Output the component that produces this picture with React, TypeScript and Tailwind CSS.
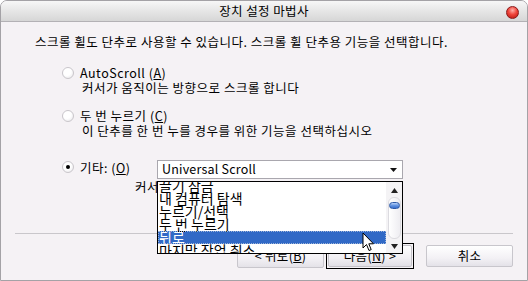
import React from 'react'

const FONT = "font-['Noto_Sans_CJK_KR','Noto_Sans',sans-serif]"

function Radio({ checked = false }: { checked?: boolean }) {
  return (
    <span className="relative w-[12px] h-[12px] shrink-0 rounded-full border border-[#c9c6cb] bg-[radial-gradient(circle_at_40%_35%,#ffffff_0%,#ffffff_45%,#e4e2e6_100%)] flex items-center justify-center">
      {checked && <span className="w-[4px] h-[4px] rounded-full bg-black" />}
    </span>
  )
}

function Key({ k }: { k: string }) {
  return <span className="underline underline-offset-[1px]">{k}</span>
}

const items = ['끌기 잠금', '내 컴퓨터 탐색', '누르기/선택', '두 번 누르기', '뒤로', '마지막 작업 취소']

function DropList() {
  return (
    <div className="absolute left-[157px] top-[181px] w-[246px] h-[73px] border border-black bg-white flex overflow-hidden">
      <div className="flex-1 relative overflow-hidden">
        <div className="absolute left-0 right-0 top-[-3px]">
          {items.map(t => {
            const sel = t === '뒤로'
            return (
              <div
                key={t}
                className={
                  'h-[13px] leading-[13px] text-[14px] pl-[1px] whitespace-nowrap ' +
                  (sel ? 'bg-[#3169c6] text-white outline outline-1 outline-dotted outline-[#9db4d8] -outline-offset-1' : 'text-black')
                }
              >
                {t}
              </div>
            )
          })}
        </div>
      </div>
      {/* scrollbar */}
      <div className="w-[16px] h-full bg-[#f4f3f5] flex flex-col items-center">
        <div className="h-[15px] w-full flex items-center justify-center pt-[2px]">
          <svg width="7" height="5" viewBox="0 0 7 5"><path d="M0 5L3.5 0L7 5Z" fill="#222" /></svg>
        </div>
        <div className="relative w-[13px] flex-1 rounded-[6px] border border-[#dcdbe0] bg-[linear-gradient(90deg,#ffffff,#eeedf1)] mb-[1px]">
          <div className="absolute left-[0px] top-[4px] w-[11px] h-[7px] rounded-[4px] border border-[#2b59a8] bg-[linear-gradient(180deg,#b5d0f7,#5c8fe0_55%,#3a6fcb)]" />
        </div>
        <div className="h-[13px] w-full flex items-center justify-center">
          <svg width="7" height="5" viewBox="0 0 7 5"><path d="M0 0L7 0L3.5 5Z" fill="#222" /></svg>
        </div>
      </div>
    </div>
  )
}

function Cursor() {
  return (
    <svg className="absolute left-[362px] top-[232px]" width="13" height="21" viewBox="0 0 13 21">
      <path d="M1 1L1 16L4.5 12.5L7 18.5L9.2 17.6L6.8 11.8L11.5 11.8Z" fill="#fff" stroke="#000" strokeWidth="1" strokeLinejoin="miter" />
    </svg>
  )
}

function Button({ children, def = false, h }: { children: React.ReactNode; def?: boolean; h: string }) {
  if (def) {
    return (
      <div className={'w-[88px] ' + h + ' border border-black p-[1px] flex'}>
        <div className="flex-1 rounded-[2px] border border-[#c4c2c8] bg-[linear-gradient(180deg,#ffffff,#f1eff3_60%,#e2e0e6)] flex items-center justify-center text-[12.5px] tracking-[0.3px] text-black">
          {children}
        </div>
      </div>
    )
  }
  return (
    <div className={'w-[87px] ' + h + ' rounded-[2px] border border-[#c8c6cc] bg-[linear-gradient(180deg,#ffffff,#f3f1f5_60%,#e4e2e8)] flex items-center justify-center text-[12.5px] tracking-[0.3px] text-black'}>
      {children}
    </div>
  )
}

export default function App() {
  return (
    <div className={'relative w-[528px] h-[281px] overflow-hidden bg-white ' + FONT}>
      <div className="w-full h-full rounded-t-[7px] border border-[#a4a2a6] bg-[#f5f2f5] flex flex-col">
        {/* title bar */}
        <div className="relative h-[21px] shrink-0 rounded-t-[6px] border-b border-[#b3b1b5] bg-[linear-gradient(180deg,#f7f7f7,#e6e6e6_50%,#d6d6d6)] flex items-center justify-center">
          <span className="text-[12.5px] tracking-[0.4px] text-black leading-none">장치 설정 마법사</span>
          <span className="absolute right-[8px] top-[5px] w-[13px] h-[13px] rounded-full border border-[#8a1a1a] bg-[radial-gradient(circle_at_50%_30%,#ffb0a8_0%,#f0463c_45%,#b3120c_100%)]" />
        </div>

        {/* body */}
        <div className="flex flex-col text-[12.5px] tracking-[0.5px] text-black">
          <div className="mt-[12px] pl-[34px] leading-[16px]">
            스크롤 휠도 단추로 사용할 수 있습니다. 스크롤 휠 단추용 기능을 선택합니다.
          </div>

          <div className="mt-[15px] leading-[15px]">
            <div className="flex items-center pl-[61px] gap-[6px]">
              <Radio />
              <span>AutoScroll (<Key k="A" />)</span>
            </div>
            <div className="pl-[81px]">커서가 움직이는 방향으로 스크롤 합니다</div>
          </div>

          <div className="mt-[13px] leading-[15px]">
            <div className="flex items-center pl-[61px] gap-[6px]">
              <Radio />
              <span>두 번 누르기 (<Key k="C" />)</span>
            </div>
            <div className="pl-[81px]">이 단추를 한 번 누를 경우를 위한 기능을 선택하십시오</div>
          </div>

          <div className="mt-[22px]">
            <div className="flex items-start pl-[61px]">
              <div className="flex items-center gap-[6px] h-[14px] w-[95px]">
                <Radio checked />
                <span className="leading-[15px]">기타: (<Key k="O" />)</span>
              </div>
              <div className="w-[246px] h-[19px] border border-[#a9a7ae] bg-white flex items-center">
                <span className="pl-[4px] flex-1 text-[12.5px] tracking-[0.2px] leading-none">Universal Scroll</span>
                <span className="w-[14px] flex justify-center pr-[3px]">
                  <svg width="7" height="4" viewBox="0 0 7 4"><path d="M0 0L7 0L3.5 4Z" fill="#111" /></svg>
                </span>
              </div>
            </div>
            <div className="pl-[134px] leading-[15px]">커서</div>
          </div>

          <div className="mt-[39px] ml-[14px] w-[498px] h-px bg-[#c9c7cb]" />

          <div className="mt-[9px] pr-[14px] flex items-center justify-end">
            <Button h="h-[24px]">&lt; 뒤로(<Key k="B" />)</Button>
            <div className="w-[2px]" />
            <Button def h="h-[26px]">다음(<Key k="N" />) &gt;</Button>
            <div className="w-[12px]" />
            <Button h="h-[22px]">취소</Button>
          </div>
        </div>
      </div>

      <DropList />
      <Cursor />
    </div>
  )
}
